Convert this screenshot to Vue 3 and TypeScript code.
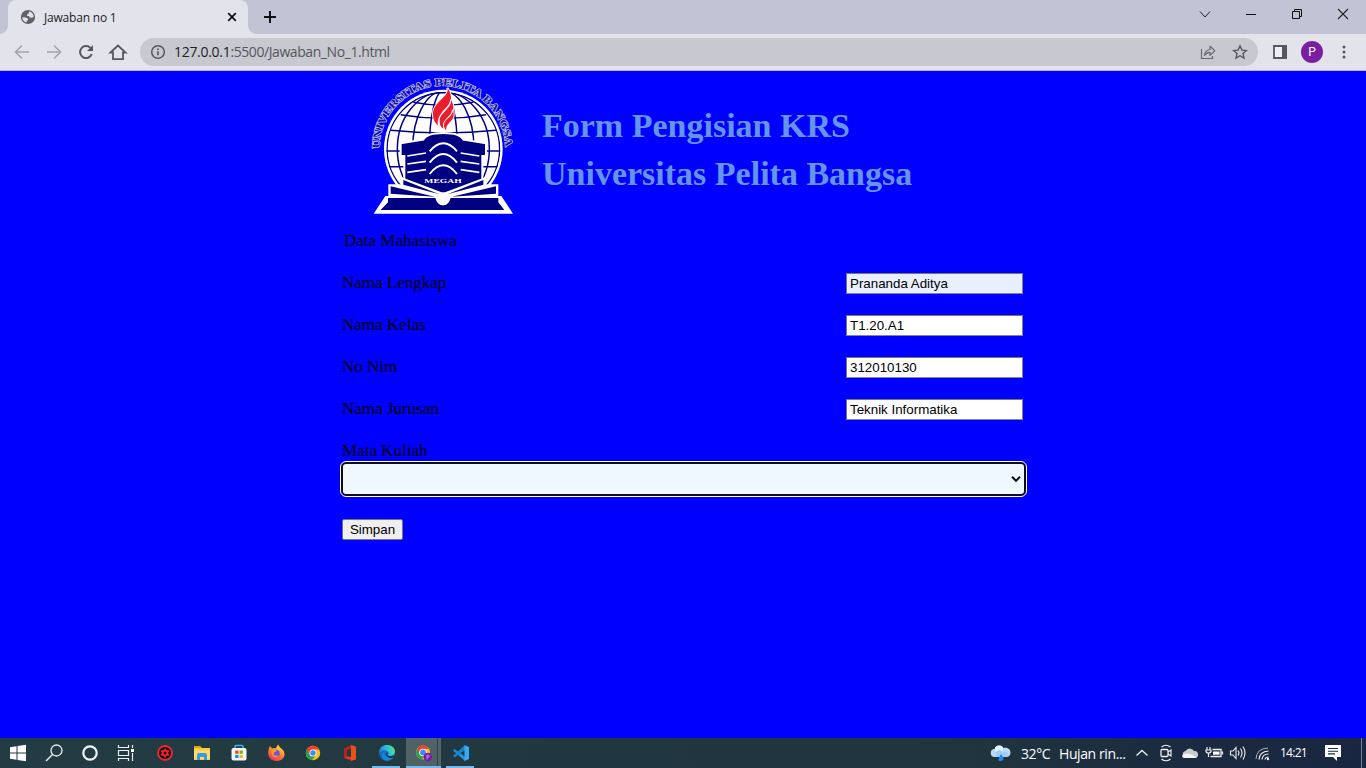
<script setup lang="ts">
import { ref } from 'vue'

interface Field {
  id: string
  label: string
  value: string
  autofilled?: boolean
}

const fields = ref<Field[]>([
  { id: 'nama', label: 'Nama Lengkap', value: 'Prananda Aditya', autofilled: true },
  { id: 'kelas', label: 'Nama Kelas', value: 'T1.20.A1' },
  { id: 'nim', label: 'No Nim', value: '312010130' },
  { id: 'jurusan', label: 'Nama Jurusan', value: 'Teknik Informatika' },
])
</script>

<template>
  <div class="screen">
    <header class="tabstrip">
      <div class="tab">
        <svg class="favicon" width="16" height="16" viewBox="0 0 16 16">
          <circle cx="8" cy="8" r="7.1" fill="#5f6368" />
          <path d="M2.300 8.300 6 8.400l2.200 1.500-.2 1.300-1.300.6-.2 1.700C3.800 12.800 2.300 10.800 2.300 8.300zM9 2.500c2.600.4 4.600 2.600 4.700 5.200l-1.500 1.100-2.500-.4-.8-1.300-2-.4.2-1.500 1.700-.6z" fill="#e3e3eb" />
        </svg>
        <span class="tab-title">Jawaban no 1</span>
        <svg class="tab-close" width="10" height="10" viewBox="0 0 10 10"><path d="M1.200 1.200l7.600 7.600M8.800 1.200 1.200 8.800" stroke="#111" stroke-width="1.700" /></svg>
      </div>
      <svg class="new-tab" width="14" height="14" viewBox="0 0 14 14"><path d="M7 1v12M1 7h12" stroke="#111" stroke-width="2" /></svg>
      <div class="window-controls">
        <svg width="46" height="28" viewBox="0 0 46 28"><path d="m18 11.500 5 5.500 5-5.500" fill="none" stroke="#222" /></svg>
        <svg width="46" height="28" viewBox="0 0 46 28"><path d="M18 14.500h10" stroke="#111" /></svg>
        <svg width="46" height="28" viewBox="0 0 46 28"><path d="M18.500 11.500h7v7h-7zM20.500 11.500v-2h7v7h-2" fill="none" stroke="#111" /></svg>
        <svg width="46" height="28" viewBox="0 0 46 28"><path d="m18 9 10 10M28 9 18 19" stroke="#222" stroke-width="1.100" /></svg>
      </div>
    </header>

    <nav class="toolbar">
      <svg width="32" height="20" viewBox="0 0 32 20"><path d="M23 10H10M16 3.500 9.500 10l6.500 6.500" fill="none" stroke="#a5a6ad" stroke-width="1.700" /></svg>
      <svg width="32" height="20" viewBox="0 0 32 20"><path d="M9 10h13M16 3.500l6.500 6.500-6.500 6.500" fill="none" stroke="#a5a6ad" stroke-width="1.700" /></svg>
      <svg width="32" height="20" viewBox="0 0 32 20"><path d="M21.700 12.200A6 6 0 1 1 20.300 5.800" fill="none" stroke="#55585d" stroke-width="2" /><path d="M23 3v6h-6z" fill="#55585d" /></svg>
      <svg width="32" height="20" viewBox="0 0 32 20"><path d="m8.500 10.500 7.500-7 7.500 7H21v6.700H11v-6.700z" fill="none" stroke="#55585d" stroke-width="1.800" /></svg>
      <div class="omnibox">
        <svg width="16" height="16" viewBox="0 0 16 16"><circle cx="8" cy="8" r="6.300" fill="none" stroke="#55585d" stroke-width="1.500" /><path d="M8 7.200v4M8 4.400v1.600" stroke="#55585d" stroke-width="1.700" /></svg>
        <span class="url"><b>127.0.0.1</b>:5500/Jawaban_No_1.html</span>
        <svg class="share" width="16" height="16" viewBox="0 0 16 16"><path d="M1.500 5v9.500h11V12" fill="none" stroke="#66686d" stroke-width="1.200" /><path d="M4.500 11.500c.4-3.700 2.500-5.600 5.500-6V2.300l4.900 4.600-4.900 4.400V8.400c-2.300-.1-4 1-5.500 3.100z" fill="none" stroke="#66686d" stroke-width="1.200" stroke-linejoin="round" /></svg>
        <svg class="star" width="16" height="16" viewBox="0 0 16 16"><path d="m8 1.900 1.900 4.200 4.500.5-3.400 3 1 4.500-4-2.400-4 2.400 1-4.500-3.400-3 4.500-.5z" fill="none" stroke="#55585d" stroke-width="1.400" /></svg>
      </div>
      <svg class="panel" width="14" height="14" viewBox="0 0 14 14"><path d="M1 1h12v12H1z" fill="#eeeef3" stroke="#55585d" stroke-width="1.800" /><path d="M9 0h5v14H9z" fill="#55585d" /></svg>
      <span class="avatar">P</span>
      <svg class="dots" width="4" height="14" viewBox="0 0 4 14" fill="#55585d"><circle cx="2" cy="2" r="1.500" /><circle cx="2" cy="7" r="1.500" /><circle cx="2" cy="12" r="1.500" /></svg>
    </nav>

    <main class="page">
      <div class="masthead">
        <svg class="crest" width="165" height="150" viewBox="0 0 495 450">
          <defs>
            <path id="crest-arc" d="M58 230A189 189 0 0 1 436 230" />
            <clipPath id="globe-clip"><circle cx="250" cy="231" r="171" /></clipPath>
          </defs>
          <circle cx="250" cy="231" r="178" fill="#fff" />
          <g clip-path="url(#globe-clip)" fill="none" stroke="#000086" stroke-width="4.500">
            <circle cx="250" cy="231" r="169" />
            <ellipse cx="250" cy="231" rx="42" ry="175" />
            <ellipse cx="250" cy="231" rx="92" ry="173" />
            <ellipse cx="250" cy="231" rx="138" ry="171" />
            <path d="M160 91q90 18 180 0M122 128q128 22 256 0M92 175q158 16 316 0M74 237h352M80 284h345" />
          </g>
          <path d="M122 214l68-11q10-20 60-20t60 20l68 11v38h-11v80l-117 44-117-44v-80h-11z" fill="#000080" stroke="#fff" stroke-width="6" />
          <g fill="none" stroke="#fff" stroke-width="5">
            <path d="M142 252l56-9M142 276l56-8M142 301l56-8M358 252l-56-9M358 276l-56-8M358 301l-56-8" />
            <path d="M209 238q41-48 82 0M209 272q41-52 82 0M209 306q41-52 82 0" stroke-width="6" />
          </g>
          <text x="249" y="332" class="crest-name" text-anchor="middle" textLength="112" lengthAdjust="spacingAndGlyphs">MEGAH</text>
          <path d="M76 372h9v-35h38v-22l122 46h10l122-46v22h38v35h9l35 53H41z" fill="#fff" />
          <path d="M130 324v14l108 29zM370 324v14l-108 29zM92 343v22l132 9zM408 343v22l-132 9z" fill="#000080" />
          <path d="M84 378h142q5 21 23 22 18-1 23-22h143v13l18 23H62l22-23z" fill="#000080" />
          <circle cx="249" cy="383" r="17" fill="#fff" />
          <g fill="#ed1c2d" stroke="#fff" stroke-width="6" paint-order="stroke">
            <path d="M262 48c9 24-43 42-43 78 0 17 6 26 15 35-6-44 42-54 39-86-1-12-5-20-11-27z" />
            <path d="M273 83c3 28-36 38-34 66 0 10 4 16 11 21-2-33 31-36 30-63 0-10-3-17-7-24z" />
            <path d="M279 113c0 21-26 27-27 45 0 7 2 12 6 17 0-24 23-26 23-46 0-6 0-11-2-16z" />
          </g>
          <text class="crest-ring"><textPath href="#crest-arc" textLength="588" lengthAdjust="spacingAndGlyphs">UNIVERSITAS PELITA BANGSA</textPath></text>
        </svg>
        <h1>Form Pengisian KRS<br />Universitas Pelita Bangsa</h1>
      </div>

      <form class="form" @submit.prevent>
        <p class="legend">Data Mahasiswa</p>
        <div v-for="field in fields" :key="field.id" class="row">
          <label :for="field.id">{{ field.label }}</label>
          <input :id="field.id" v-model="field.value" type="text" :class="{ autofilled: field.autofilled }" />
        </div>
        <label class="course-label" for="matkul">Mata Kuliah</label>
        <div id="matkul" class="select" tabindex="0">
          <svg width="10" height="8" viewBox="0 0 10 8"><path d="m1 1.800 4 4 4-4" fill="none" stroke="#111" stroke-width="2" /></svg>
        </div>
        <button type="submit">Simpan</button>
      </form>
    </main>

    <footer class="taskbar">
      <div class="system">
        <svg width="36" height="30" viewBox="0 0 36 30"><path d="M10 9.200l6.500-1v6.300H10zM17.500 8l8.500-1.200v7.700h-8.500zM10 15.500h6.500v6.300l-6.500-1zM17.500 15.500H26v7.700L17.500 22z" fill="#fff" /></svg>
        <svg width="36" height="30" viewBox="0 0 36 30"><circle cx="20.500" cy="12.500" r="5.500" fill="none" stroke="#eee" stroke-width="1.300" /><path d="m16.500 16.500-6.500 6.500" stroke="#eee" stroke-width="1.500" /></svg>
        <svg width="36" height="30" viewBox="0 0 36 30"><circle cx="18" cy="15" r="6.700" fill="none" stroke="#f4f4f4" stroke-width="2.200" /></svg>
        <svg width="36" height="30" viewBox="0 0 36 30"><path d="M10.500 7v2.500h10V7M10.500 23v-2.500h10V23M10.500 12.500h10v5h-10zM24.500 7v3M24.500 15v8" fill="none" stroke="#eee" stroke-width="1.200" /><path d="M23 11h3v3h-3z" fill="#fff" /></svg>
      </div>
      <div class="apps">
        <span class="app"><svg width="20" height="20" viewBox="0 0 20 20"><circle cx="10" cy="10" r="7" fill="#150a0d" stroke="#f0282e" stroke-width="1.900" /><circle cx="10" cy="10" r="2.500" fill="none" stroke="#ef262d" stroke-width="1.900" /><path d="M10 5.500v1.500M10 13v1.500M6.100 7.700l1.300.8M12.600 11.500l1.300.8M13.900 7.700l-1.300.8M7.400 11.500l-1.300.8" stroke="#ef262d" stroke-width="1.600" /></svg></span>
        <span class="app"><svg width="20" height="20" viewBox="0 0 20 20"><path d="M2 3h6l2 2h8v12H2z" fill="#ffc93c" /><path d="M2 3h6l1.500 2H2z" fill="#e49a16" /><path d="M2 7h16v9H2z" fill="#ffda6b" /><path d="M5 17v-5q0-2 2-2h6q2 0 2 2v5h-3v-3H8v3z" fill="#349be5" /></svg></span>
        <span class="app"><svg width="20" height="20" viewBox="0 0 20 20"><path d="M6 6V3.500q0-1 1-1h6q1 0 1 1V6" fill="none" stroke="#32b8ee" stroke-width="1.400" /><rect x="2.500" y="5" width="15" height="12.500" rx="2" fill="#f4f5f6" /><path d="M6.200 7.500h3.300v3.300H6.200z" fill="#eb4a27" /><path d="M10.500 7.500h3.300v3.300h-3.300z" fill="#7bb60a" /><path d="M6.200 11.800h3.300V15H6.200z" fill="#079ce6" /><path d="M10.500 11.800h3.300V15h-3.300z" fill="#fbb810" /></svg></span>
        <span class="app"><svg width="20" height="20" viewBox="0 0 20 20">
          <defs><linearGradient id="fox" x1=".8" y1="0" x2=".25" y2="1"><stop stop-color="#fff045" /><stop offset=".4" stop-color="#ff9b27" /><stop offset="1" stop-color="#f0265e" /></linearGradient></defs>
          <path d="M3 5l1-2 2 2.500L10 5l2-3.500 2 3 3 2.500c4 6-.5 11-6.500 11C4 18 .500 13 3 5z" fill="url(#fox)" /><circle cx="10" cy="10.500" r="3.800" fill="#7654cf" /><path d="M5 7.500l4-.8 2 1.400-3.300 1.500c-1 3 2 4 4.800 2.600-2 4-7 2-7.500-4.700z" fill="#ff9f2a" />
        </svg></span>
        <span class="app"><svg width="18" height="18" viewBox="0 0 20 20"><circle cx="10" cy="10" r="8" fill="#fbc116" /><path d="M10 10 3.100 6A8 8 0 0 0 9 18l4.500-6z" fill="#2ba24c" /><path d="M3.100 6A8 8 0 0 1 17 6h-7l-3.500 6z" fill="#e94335" /><circle cx="10" cy="10" r="4" fill="#fff" /><circle cx="10" cy="10" r="3" fill="#4285f4" /></svg></span>
        <span class="app"><svg width="20" height="20" viewBox="0 0 20 20"><path d="M4 5.500 11.500 2v3.500L7 7v6.500l4.500 1v3.500L4 15z" fill="#b7231c" /><path d="m11 2 5 1.600v12.800L11 18z" fill="#eb5018" /><path d="M7 13.500l4 .5v2.500L5 15z" fill="#dc3b30" /></svg></span>
        <span class="app running"><svg width="20" height="20" viewBox="0 0 20 20">
          <defs><linearGradient id="edge" x1="0" y1=".3" x2="1" y2="0"><stop stop-color="#2185d0" /><stop offset=".5" stop-color="#2dc5df" /><stop offset="1" stop-color="#70e34c" /></linearGradient></defs>
          <circle cx="10" cy="10" r="8" fill="#1768ba" /><path d="M2 9C3 4 6 2 10 2c5 0 8 3 8 6.500 0 3-2.500 4.500-6 4.500-2 0-1-1-.5-2 .8-2-2-4-5-3.500C4 7.500 2.500 9 2 11z" fill="url(#edge)" /><path d="M8 8c-2 4 1 8 8 6-2 3-6 5-9 2.500S5 9 8 8z" fill="#1589db" /><path d="M10.500 9c-.8 2 0 3.500 2 3.900 2 .4 4 .1 5.300-.7l-1.200 2.300c-2 .7-4.400.5-5.900-.6-1.700-1.300-1.900-3.500-.2-4.900z" fill="#24383f" />
        </svg></span>
        <span class="app running active"><svg width="20" height="20" viewBox="0 0 20 20"><circle cx="9" cy="9.500" r="7" fill="#fbc116" /><path d="M9 9.500 3 6a7 7 0 0 0 5 10.500l4-5z" fill="#2ba24c" /><path d="M3 6a7 7 0 0 1 12 0H9l-3 5z" fill="#e94335" /><circle cx="9" cy="9.500" r="3.800" fill="#fff" /><circle cx="9" cy="9.500" r="2.900" fill="#4285f4" /><circle cx="13.800" cy="14" r="4.200" fill="#761da0" /><path d="M13 16.500v-4.400h1.200a1 1 0 0 1 0 2H13" fill="none" stroke="#d4acdf" stroke-width=".8" /></svg></span>
        <span class="app running"><svg width="20" height="20" viewBox="0 0 20 20"><path d="M14 2v16L2 7.500 3.500 6 14 13.500z" fill="#248edb" /><path d="M14 2v5L3.500 14.500 2 13z" fill="#1683ce" /><path d="m13.500 2 4.500 2v12l-4.500 2z" fill="#38a9f4" /></svg></span>
      </div>
      <div class="tray">
        <svg class="weather" width="22" height="18" viewBox="0 0 22 18"><path d="M5 13a4 4 0 0 1-.5-8C5 1 12 0 13.500 4c3.500-1 7 1 7 4.500S18 13 16 13z" fill="#b7dcfa" /><circle cx="9" cy="5.500" r="4" fill="#e8f4fe" /><path d="M6 12.500a4 4 0 0 1 7-4.500c3-1 6 1 6 4-3 1.500-10 1.500-13 .5z" fill="#9fcff7" /><path d="M11 10q5 6 0 7t0-7z" fill="#2388ec" /></svg>
        <span class="temp">32°C</span>
        <span class="forecast">Hujan rin...</span>
        <svg width="24" height="20" viewBox="0 0 24 20"><path d="m6.500 12.500 5.500-5 5.500 5" fill="none" stroke="#eee" stroke-width="1.300" /></svg>
        <svg width="24" height="20" viewBox="0 0 24 20"><rect x="7" y="6.500" width="7" height="7" rx="1" fill="none" stroke="#eee" stroke-width="1.300" /><path d="m14 9 3-2v6l-3-2M7.500 4Q12 .500 16.500 4M7.500 16q4.500 3.500 9 0" fill="none" stroke="#eee" stroke-width="1.200" /></svg>
        <svg width="24" height="20" viewBox="0 0 24 20"><path d="M8 15a3.500 3.500 0 0 1-.5-6.900A4.800 4.800 0 0 1 16 8a3.500 3.500 0 0 1 1 7z" fill="#c9cbcd" /><path d="M6 15c-3-1-2-4 1-4 5-.5 7 0 12 4z" fill="#f5f5f5" /></svg>
        <svg width="24" height="20" viewBox="0 0 24 20"><path d="M10.500 6.500h8.500v7H8.500M20.500 8.500v3" fill="none" stroke="#eee" stroke-width="1.300" /><path d="M11 8.500h6.500v3.200H11z" fill="#fff" /><path d="M5 4v3M8 4v3M4 7h5v1q0 2-2.500 2T4 8zM6.500 10v4" fill="none" stroke="#eee" stroke-width="1.200" /></svg>
        <svg width="24" height="20" viewBox="0 0 24 20"><path d="M4.500 8H7l3-3.500v11L7 12H4.500zM12 7.500q2 2.500 0 5M14.500 5.500q3 4.500 0 9M17 3.500q4 6.500 0 13" fill="none" stroke="#eee" stroke-width="1.100" /></svg>
        <svg class="wifi" width="24" height="20" viewBox="0 0 24 20"><path d="M9 16.500q.5-8 9.500-8.500M12 16.500q.5-5.500 6.500-5.500M15 16.500q.5-2.500 3.500-2.500" fill="none" stroke="#eee" stroke-width="1.200" /><path d="M6 16Q6.500 5.500 18 5" fill="none" stroke="#a9b3bd" /><circle cx="18" cy="16" r="1.200" fill="#fff" /></svg>
        <span class="clock">14:21</span>
        <svg class="notice" width="18" height="18" viewBox="0 0 18 18"><path d="M1 1h16v12h-4v4l-4-4H1z" fill="#fff" /><path d="M4 4.500h10M4 7.200h10M4 9.900h7" stroke="#1a2c40" stroke-width="1.100" /></svg>
        <i class="peek"></i>
      </div>
    </footer>
  </div>
</template>

<style>
body { margin: 0; overflow: hidden; }
</style>

<style scoped>
* { box-sizing: border-box; }
svg { display: block; flex: none; }
.screen { width: 1366px; height: 768px; display: flex; flex-direction: column; background: #00f; overflow: hidden; font-family: "Noto Sans", "Open Sans", sans-serif; }
.tabstrip { height: 34px; flex: none; display: flex; background: #c3c3d6; padding-left: 8px; }
.tab { position: relative; width: 240px; height: 34px; padding: 0 11px 0 12px; display: flex; align-items: center; background: #e3e3eb; border-radius: 8px 8px 0 0; }
.tab::before, .tab::after { content: ""; position: absolute; bottom: 0; width: 8px; height: 8px; }
.tab::before { left: -8px; background: radial-gradient(circle at 0 0, transparent 7.500px, #e3e3eb 8px); }
.tab::after { right: -8px; background: radial-gradient(circle at 100% 0, transparent 7.500px, #e3e3eb 8px); }
.tab-title { margin-left: 8px; font: 12px "Open Sans", sans-serif; letter-spacing: -.2px; color: #222; white-space: nowrap; }
.tab-close { margin-left: auto; }
.new-tab { margin: 10px 0 0 15px; }
.window-controls { margin-left: auto; display: flex; }
.toolbar { height: 37px; flex: none; display: flex; align-items: center; background: #e3e3eb; border-bottom: 1px solid #b7b7c2; padding-left: 6px; }
.omnibox { width: 1118px; height: 28px; margin-left: 6px; padding: 0 10px; display: flex; align-items: center; background: #c8c8d0; border-radius: 14px; }
.url { margin: -1px 0 0 8px; font: 14px "Open Sans", sans-serif; letter-spacing: -.42px; color: #55565b; white-space: nowrap; }
.url b { font-weight: 400; color: #202124; letter-spacing: -.3px; }
.share { margin-left: auto; }
.star { margin-left: 16px; }
.panel { margin-left: 15px; }
.avatar { width: 22px; height: 22px; margin-left: 14px; border-radius: 50%; background: #7b1fa2; color: #fff; font: 12px/22px Roboto, sans-serif; text-align: center; }
.dots { margin-left: 19px; }
.page { flex: 1; width: 684px; margin: 0 auto; font-family: "Liberation Serif", serif; color: #000; }
.masthead { display: flex; height: 151px; padding: 1px 0 0 19px; }
.crest-ring { font: bold 32px "Liberation Serif", serif; fill: #15159c; stroke: #c6c6ee; stroke-width: 4px; paint-order: stroke; }
.crest-name { font: bold 20px "Liberation Serif", serif; fill: #fff; }
h1 { margin: 30px 0 0 17px; font-size: 34px; line-height: 48px; color: #6495ed; white-space: nowrap; }
.form { font-size: 17px; }
.legend { margin: 0 0 0 3px; height: 40px; line-height: 38px; }
.row { display: flex; align-items: center; justify-content: space-between; height: 42px; padding: 0 2px 0 1px; line-height: 20px; }
input { width: 177px; height: 21px; margin: 0; padding: 1px 2px 1px 3px; border: 1px solid; border-color: #767676 #858585 #858585 #767676; border-radius: 0; background: #fff; font: 13.333px "Liberation Sans", sans-serif; color: #000; }
input.autofilled { background: #e8f0fe; }
.course-label { display: block; height: 32px; padding: 11px 0 0 1px; line-height: 20px; }
.select { width: 685px; height: 34px; background: #f0f8ff; border: 2px solid #101010; border-radius: 5px; outline: 1px solid #fff; display: flex; align-items: center; justify-content: flex-end; padding-right: 3px; }
button { display: block; width: 61px; height: 21px; margin: 23px 0 0 1px; padding: 0; border: 1px solid #767676; border-radius: 2px; background: #efefef; font: 13.333px "Liberation Sans", sans-serif; color: #000; }
.taskbar { height: 30px; flex: none; display: flex; background: linear-gradient(90deg, #233c43, #21373f 45%, #20343d 72%, #1b2b40 85%, #192641); color: #fff; }
.system, .apps { display: flex; }
.apps { margin-left: 2px; }
.app { position: relative; width: 37px; height: 30px; display: flex; align-items: center; justify-content: center; }
.running::after { content: ""; position: absolute; left: 4px; right: 5px; bottom: 0; height: 2px; background: #76b9ed; }
.active { background: linear-gradient(90deg, transparent 1px, #4f6268 1px, #4f6268 32px, #2c4147 32px, #2c4147 33px, #536569 33px, #536569 36px, transparent 36px); }
.active::after { left: 1px; right: 1px; }
.tray { margin-left: auto; display: flex; align-items: center; font-size: 13px; white-space: nowrap; }
.temp { width: 38px; margin-left: 9px; font-family: "Open Sans", sans-serif; font-size: 14px; letter-spacing: -.4px; }
.forecast { width: 71px; font-family: "Open Sans", sans-serif; font-size: 14px; letter-spacing: -.4px; }
.clock { width: 28px; margin: -1px 0 0 6px; font: 12px "Open Sans", sans-serif; letter-spacing: -.75px; }
.notice { margin-left: 16px; }
.peek { width: 1px; height: 30px; margin: 0 4px 0 19px; background: #74808f; }
</style>
